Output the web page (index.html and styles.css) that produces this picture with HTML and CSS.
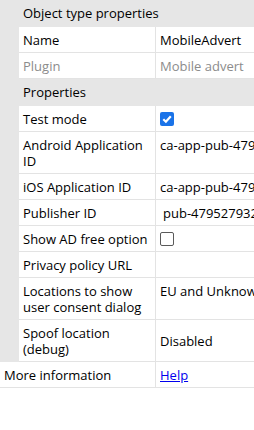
FILE: index.html
```html
<!DOCTYPE html>
<html>
<head>
<meta charset="utf-8">
<link rel="stylesheet" href="styles.css">
</head>
<body>
<div class="grid">
  <div class="group">Object type properties</div>
  <div class="gutter"></div><div class="label">Name</div><div class="value">MobileAdvert</div>
  <div class="gutter"></div><div class="label dim">Plugin</div><div class="value dim">Mobile advert</div>
  <div class="group">Properties</div>
  <div class="gutter"></div><div class="label">Test mode</div><div class="value"><span class="cb checked"><svg viewBox="0 0 14 14" width="14" height="14"><path d="M3.3 7.2 L5.9 9.7 L10.8 4.3" fill="none" stroke="#fff" stroke-width="2.2"/></svg></span></div>
  <div class="gutter"></div><div class="label">Android Application ID</div><div class="value top">ca-app-pub-4795279322</div>
  <div class="gutter"></div><div class="label">iOS Application ID</div><div class="value">ca-app-pub-4795279322</div>
  <div class="gutter"></div><div class="label">Publisher ID</div><div class="value"><span class="pad">pub-4795279322</span></div>
  <div class="gutter"></div><div class="label">Show AD free option</div><div class="value"><span class="cb"></span></div>
  <div class="gutter"></div><div class="label">Privacy policy URL</div><div class="value"></div>
  <div class="gutter"></div><div class="label">Locations to show user consent dialog</div><div class="value top">EU and Unknown</div>
  <div class="gutter"></div><div class="label">Spoof location (debug)</div><div class="value">Disabled</div>
  <div class="label wide">More information</div><div class="value"><a href="#">Help</a></div>
</div>
</body>
</html>
```
FILE: styles.css
```css
html, body {
  margin: 0;
  padding: 0;
  background: #fff;
}
body {
  font-family: "Open Sans", "Noto Sans", sans-serif;
  font-size: 13px;
  line-height: 16px;
  color: #000;
  overflow: hidden;
}
.grid {
  display: grid;
  grid-template-columns: 19px 136px 1fr;
  width: 254px;
}
.group {
  grid-column: 1 / 4;
  background: #e6e6e6;
  padding: 5px 4px 6px 23px;
  white-space: nowrap;
  overflow: hidden;
}
.gutter {
  background: #e6e6e6;
}
.label {
  padding: 5px 4px 4px 4px;
  border-bottom: 1px solid #e3e3e3;
  display: flex;
  align-items: center;
}
.label.wide {
  grid-column: 1 / 3;
  padding-left: 4px;
}
.value {
  padding: 5px 4px 4px 4px;
  border-left: 1px solid #e3e3e3;
  border-bottom: 1px solid #e3e3e3;
  white-space: nowrap;
  overflow: hidden;
  display: flex;
  align-items: center;
}
.value.top {
  align-items: flex-start;
}
.dim {
  color: #8c8c8c;
}
.pad {
  padding-left: 3px;
}
.cb {
  display: inline-block;
  width: 12px;
  height: 12px;
  border: 1px solid #5a5a5a;
  border-radius: 2px;
  background: #fff;
}
.cb.checked {
  width: 14px;
  height: 14px;
  border: none;
  background: #1a73e8;
  border-radius: 2px;
}
.cb svg { display: block; }
a {
  color: #0000ee;
  text-decoration: underline;
}
```
